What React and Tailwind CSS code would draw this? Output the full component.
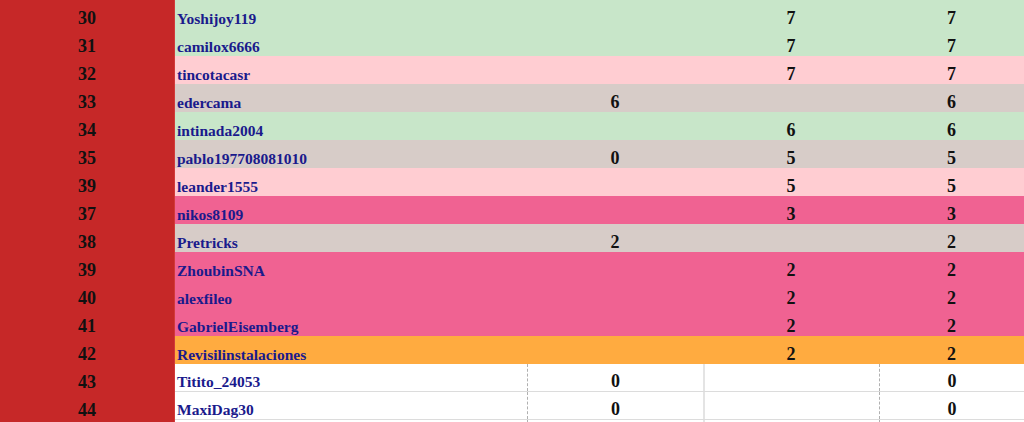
import React from 'react';

// Leaderboard slice: rank, user, three score columns
const ROWS = [
  { rank: 30, name: 'Yoshijoy119', a: '', b: '7', total: '7', bg: 'bg-[#c8e6c9]' },
  { rank: 31, name: 'camilox6666', a: '', b: '7', total: '7', bg: 'bg-[#c8e6c9]' },
  { rank: 32, name: 'tincotacasr', a: '', b: '7', total: '7', bg: 'bg-[#ffcdd2]' },
  { rank: 33, name: 'edercama', a: '6', b: '', total: '6', bg: 'bg-[#d7ccc8]' },
  { rank: 34, name: 'intinada2004', a: '', b: '6', total: '6', bg: 'bg-[#c8e6c9]' },
  { rank: 35, name: 'pablo197708081010', a: '0', b: '5', total: '5', bg: 'bg-[#d7ccc8]' },
  { rank: 39, name: 'leander1555', a: '', b: '5', total: '5', bg: 'bg-[#ffcdd2]' },
  { rank: 37, name: 'nikos8109', a: '', b: '3', total: '3', bg: 'bg-[#f06292]' },
  { rank: 38, name: 'Pretricks', a: '2', b: '', total: '2', bg: 'bg-[#d7ccc8]' },
  { rank: 39, name: 'ZhoubinSNA', a: '', b: '2', total: '2', bg: 'bg-[#f06292]' },
  { rank: 40, name: 'alexfileo', a: '', b: '2', total: '2', bg: 'bg-[#f06292]' },
  { rank: 41, name: 'GabrielEisemberg', a: '', b: '2', total: '2', bg: 'bg-[#f06292]' },
  { rank: 42, name: 'Revisilinstalaciones', a: '', b: '2', total: '2', bg: 'bg-[#ffab40]' },
  { rank: 43, name: 'Titito_24053', a: '0', b: '', total: '0', bg: 'bg-white', plain: true },
  { rank: 44, name: 'MaxiDag30', a: '0', b: '', total: '0', bg: 'bg-white', plain: true },
  { rank: '', name: '', a: '', b: '', total: '', bg: 'bg-white', plain: true },
];

const Row = ({ row }) => {
  const num = 'flex items-end justify-center pb-[1px] text-[18px] leading-none font-bold text-[#111]';
  return (
    <div className="grid grid-cols-[175px_1fr] h-[28px]">
      <div className={`${num} bg-[#c62828] border-r border-[#d23a3a]`}>{row.rank}</div>
      <div className={`grid grid-cols-[352px_176px_176px_1fr] ${row.bg} ${row.plain ? 'border-b border-[#dcdcdc]' : ''}`}>
        <div className="flex items-end pl-[2px] pb-[2px] text-[15.5px] leading-none font-bold text-[#1a1a8c]">
          {row.name}
        </div>
        <div className={`${num} ${row.plain ? 'border-l border-dashed border-[#b0b0b0]' : ''}`}>{row.a}</div>
        <div className={`${num} ${row.plain ? 'border-l-2 border-[#e4e4e4]' : ''}`}>{row.b}</div>
        <div className={`${num} ${row.plain ? 'border-l border-dashed border-[#b0b0b0]' : ''}`}>{row.total}</div>
      </div>
    </div>
  );
};

export default function App() {
  return (
    <div className="w-[1024px] h-[422px] overflow-hidden bg-white" style={{ fontFamily: '"Liberation Serif", "DejaVu Serif", serif' }}>
      {ROWS.map((row, i) => (
        <Row key={i} row={row} />
      ))}
    </div>
  );
}
